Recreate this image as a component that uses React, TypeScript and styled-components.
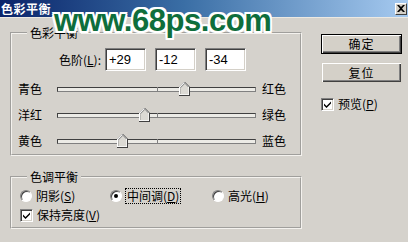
import React from "react";
import styled, { createGlobalStyle } from "styled-components";

const GlobalStyle = createGlobalStyle`
  html, body {
    margin: 0;
    padding: 0;
    background: #d4d0c8;
  }
  body {
    font-family: "Noto Sans CJK SC", "Liberation Sans", sans-serif;
    font-size: 12px;
    color: #000;
  }
`;

const Window = styled.div`
  position: relative;
  width: 408px;
  height: 242px;
  background: #d5d2cc;
  overflow: hidden;
`;

const TitleBar = styled.div`
  height: 17px;
  display: flex;
  align-items: center;
  justify-content: space-between;
  padding: 0 2px 0 1px;
  background: linear-gradient(90deg, #0a246a 0%, #3a6ea5 45%, #a6caf0 100%);
  border-bottom: 1px solid #ece9e2;
`;

const Title = styled.span`
  color: #fff;
  font-weight: bold;
  font-size: 12px;
  line-height: 14px;
  letter-spacing: 0.5px;
`;

const CloseButton = styled.div`
  width: 12px;
  height: 12px;
  background: #d4d0c8;
  border-top: 1px solid #fff;
  border-left: 1px solid #fff;
  border-right: 1px solid #404040;
  border-bottom: 1px solid #404040;
  display: flex;
  align-items: center;
  justify-content: center;
  box-sizing: border-box;
  margin-right: -1px;
`;

const Watermark = styled.div`
  position: absolute;
  left: 54px;
  top: 4px;
  font-family: "Liberation Sans", Arial, sans-serif;
  font-weight: bold;
  font-size: 32px;
  line-height: 32px;
  letter-spacing: -0.5px;
  color: #0e6e3c;
  transform: scaleX(0.97);
  transform-origin: left top;
  pointer-events: none;
  text-shadow:
    2px 0 #fff, -2px 0 #fff, 0 2px #fff, 0 -2px #fff,
    2px 2px #fff, -2px -2px #fff, 2px -2px #fff, -2px 2px #fff;
`;

const Body = styled.div`
  display: flex;
  padding: 8px 0 0 10px;
`;

const LeftColumn = styled.div`
  width: 292px;
  display: flex;
  flex-direction: column;
  gap: 14px;
`;

const Group = styled.fieldset<{ $height: number }>`
  margin: 0;
  padding: 0 6px 0 6px;
  height: ${(p) => p.$height}px;
  box-sizing: border-box;
  border: 2px groove #f4f2ee;
  min-width: 0;
`;

const Legend = styled.legend`
  padding: 0 3px;
  margin-left: 9px;
  font-size: 12px;
  line-height: 14px;
`;

const LevelRow = styled.div`
  display: flex;
  align-items: center;
  gap: 9px;
  margin-top: 8px;
  padding-left: 41px;
  height: 23px;
`;

const LevelLabel = styled.span`
  margin-right: -5px;
  line-height: 14px;
`;

const Field = styled.div`
  width: 41px;
  height: 23px;
  box-sizing: border-box;
  background: #fff;
  border-top: 1px solid #808080;
  border-left: 1px solid #808080;
  border-right: 1px solid #fff;
  border-bottom: 1px solid #fff;
  box-shadow: inset 1px 1px #404040, inset -1px -1px #d4d0c8;
  padding: 3px 0 0 3px;
  font-family: "Liberation Sans", Arial, sans-serif;
  font-size: 13px;
  line-height: 15px;
`;

const Sliders = styled.div`
  display: flex;
  flex-direction: column;
  margin-top: 5px;
`;

const SliderRow = styled.div`
  display: grid;
  grid-template-columns: 39px 199px 24px;
  align-items: center;
  height: 26px;
`;

const SideLabel = styled.span<{ $right?: boolean }>`
  line-height: 14px;
  justify-self: ${(p) => (p.$right ? "end" : "start")};
  margin-right: ${(p) => (p.$right ? "-6px" : "0")};
`;

const Track = styled.div`
  position: relative;
  height: 5px;
  box-sizing: border-box;
  background: #ecebe6;
  border: 1px solid #404040;
  border-bottom-color: #808080;
  border-right-color: #808080;
`;

const CenterTick = styled.div`
  position: absolute;
  left: 50%;
  top: -1px;
  width: 1px;
  height: 5px;
  background: #808080;
`;

const Thumb = styled.svg`
  position: absolute;
  top: -6px;
  width: 11px;
  height: 14px;
  margin-left: -6px;
`;

const RightColumn = styled.div`
  margin-left: 19px;
  margin-top: 8px;
  width: 81px;
  display: flex;
  flex-direction: column;
`;

const Button = styled.div<{ $default?: boolean }>`
  height: ${(p) => (p.$default ? 20 : 21)}px;
  box-sizing: border-box;
  display: flex;
  align-items: center;
  justify-content: center;
  background: #d4d0c8;
  border: 1px solid ${(p) => (p.$default ? "#000" : "transparent")};
  box-shadow: inset 1px 1px #fff, inset -1px -1px #404040, inset -2px -2px #808080;
  border-top-color: ${(p) => (p.$default ? "#000" : "#d4d0c8")};
  margin-bottom: 8px;
  letter-spacing: 1px;
  line-height: 14px;
`;

const CheckLine = styled.label<{ $top?: number }>`
  display: flex;
  align-items: center;
  gap: 4px;
  line-height: 14px;
  height: 14px;
  margin-top: ${(p) => p.$top ?? 0}px;
`;

const Box = styled.span`
  width: 13px;
  height: 13px;
  box-sizing: border-box;
  background: #fff;
  border-top: 1px solid #808080;
  border-left: 1px solid #808080;
  border-right: 1px solid #fff;
  border-bottom: 1px solid #fff;
  box-shadow: inset 1px 1px #404040, inset -1px -1px #d4d0c8;
  display: flex;
  align-items: center;
  justify-content: center;
`;

const Radio = styled.span<{ $on?: boolean }>`
  width: 12px;
  height: 12px;
  box-sizing: border-box;
  border-radius: 50%;
  background: #fff;
  border: 1px solid;
  border-color: #808080 #fff #fff #808080;
  box-shadow: inset 1px 1px #404040;
  display: flex;
  align-items: center;
  justify-content: center;
  &::after {
    content: "";
    display: ${(p) => (p.$on ? "block" : "none")};
    width: 4px;
    height: 4px;
    border-radius: 50%;
    background: #000;
  }
`;

const U = styled.span`
  text-decoration: underline;
  text-underline-offset: 1px;
`;

const Focus = styled.span`
  outline: 1px dotted #000;
  padding: 0 1px;
`;

const ToneRow = styled.div`
  display: grid;
  grid-template-columns: 90px 102px auto;
  align-items: center;
  padding-left: 2px;
  margin-top: 4px;
  height: 16px;
`;

const KeepRow = styled.div`
  padding-left: 2px;
  margin-top: 4px;
`;

function CheckMark() {
  return (
    <svg width="9" height="9" viewBox="0 0 9 9">
      <path d="M1 3.5 L3.5 6 L8 1.5 L8 3.5 L3.5 8 L1 5.5 Z" fill="#000" />
    </svg>
  );
}

function Slider({ left, right, value }: { left: string; right: string; value: number }) {
  const pct = ((value + 100) / 200) * 100;
  return (
    <SliderRow>
      <SideLabel>{left}</SideLabel>
      <Track>
        <CenterTick />
        <Thumb viewBox="0 0 11 14" style={{ left: `${pct}%` }}>
          <polygon points="0,5 5,0 6,0 11,5 11,14 0,14" fill="#404040" />
          <polygon points="0,5 5,0 10,5 10,13 0,13" fill="#fff" />
          <polygon points="1,5.5 5.5,1 9,4.5 9,12 1,12" fill="#808080" />
          <polygon points="1,6 5.5,1.5 9,5.5 9,12 1,12" fill="#dcdad4" transform="translate(0.4 0.2)" />
        </Thumb>
      </Track>
      <SideLabel $right>{right}</SideLabel>
    </SliderRow>
  );
}

export default function App() {
  return (
    <>
      <GlobalStyle />
      <Window>
        <TitleBar>
          <Title>色彩平衡</Title>
          <CloseButton>
            <svg width="8" height="7" viewBox="0 0 8 7">
              <path d="M0 0 L2 0 L4 2 L6 0 L8 0 L5 3.5 L8 7 L6 7 L4 5 L2 7 L0 7 L3 3.5 Z" fill="#000" />
            </svg>
          </CloseButton>
        </TitleBar>
        <Body>
          <LeftColumn>
            <Group $height={130}>
              <Legend>色彩平衡</Legend>
              <LevelRow>
                <LevelLabel>
                  色阶(<U>L</U>):
                </LevelLabel>
                <Field>+29</Field>
                <Field>-12</Field>
                <Field>-34</Field>
              </LevelRow>
              <Sliders>
                <Slider left="青色" right="红色" value={29} />
                <Slider left="洋红" right="绿色" value={-12} />
                <Slider left="黄色" right="蓝色" value={-34} />
              </Sliders>
            </Group>
            <Group $height={59}>
              <Legend>色调平衡</Legend>
              <ToneRow>
                <CheckLine>
                  <Radio />
                  <span>
                    阴影(<U>S</U>)
                  </span>
                </CheckLine>
                <CheckLine>
                  <Radio $on />
                  <Focus>
                    中间调(<U>D</U>)
                  </Focus>
                </CheckLine>
                <CheckLine>
                  <Radio />
                  <span>
                    高光(<U>H</U>)
                  </span>
                </CheckLine>
              </ToneRow>
              <KeepRow>
                <CheckLine>
                  <Box>
                    <CheckMark />
                  </Box>
                  <span>
                    保持亮度(<U>V</U>)
                  </span>
                </CheckLine>
              </KeepRow>
            </Group>
          </LeftColumn>
          <RightColumn>
            <Button $default>确定</Button>
            <Button>复位</Button>
            <CheckLine $top={6}>
              <Box>
                <CheckMark />
              </Box>
              <span>
                预览(<U>P</U>)
              </span>
            </CheckLine>
          </RightColumn>
        </Body>
        <Watermark>www.68ps.com</Watermark>
      </Window>
    </>
  );
}
